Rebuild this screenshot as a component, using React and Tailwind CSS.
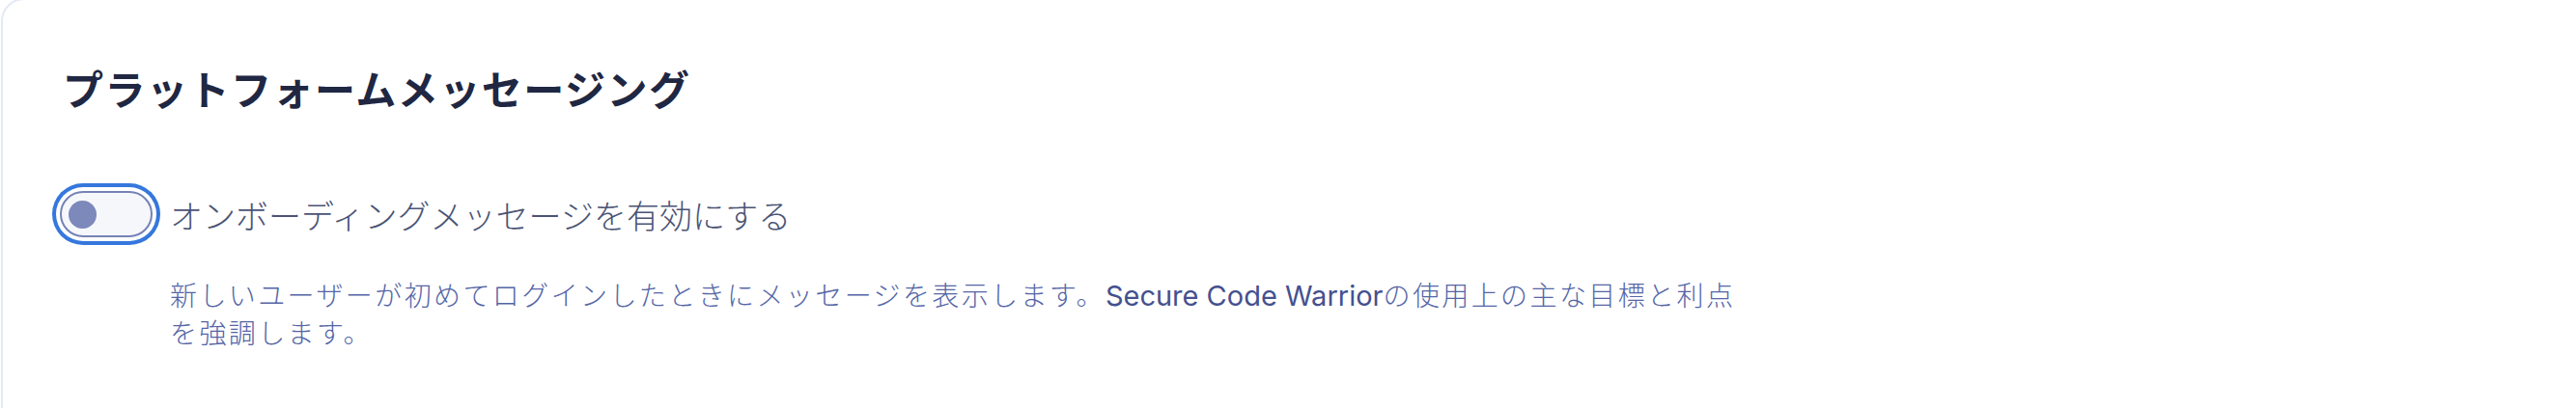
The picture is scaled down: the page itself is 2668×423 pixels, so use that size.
import React, { useState } from "react";

const cjk = { fontFamily: '"Noto Sans CJK JP", "Noto Sans", sans-serif' };
const mixed = { fontFamily: 'Inter, "Noto Sans CJK JP", sans-serif' };

export default function App() {
  const [enabled, setEnabled] = useState(false);

  return (
    <div className="min-h-[423px] bg-white overflow-hidden">
      <section className="-mt-0.5 ml-px min-h-[440px] w-[2700px] rounded-tl-[24px] border-2 border-[#e4e8f4] bg-white pl-[62px] pt-[62px]">
        <h2
          style={cjk}
          className="text-[42px] leading-[1.4] font-bold tracking-[1.5px] text-[#1f2742]"
        >
          プラットフォームメッセージング
        </h2>

        <div className="mt-[76px] flex items-center gap-[18px]">
          <button
            type="button"
            role="switch"
            aria-checked={enabled}
            onClick={() => setEnabled(!enabled)}
            className="ml-[-3px] flex h-[48px] w-[96px] shrink-0 items-center rounded-full border-2 border-[#7482b6] bg-[#f6f7fb] pl-[7px] ring-4 ring-[#3577dd] ring-offset-4 ring-offset-white"
          >
            <span className="block h-[29px] w-[29px] rounded-full bg-[#7d88bb]" />
          </button>
          <span
            style={cjk}
            className="text-[34px] leading-normal font-light tracking-normal text-[#4b5475]"
          >
            オンボーディングメッセージを有効にする
          </span>
        </div>

        <p
          style={mixed}
          className="mt-[39px] ml-[111px] max-w-[1635px] text-[28px] leading-[39px] font-light tracking-[2.4px] text-[#5566a6]"
        >
          新しいユーザーが初めてログインしたときにメッセージを表示します。
          <span className="text-[29px] font-normal tracking-normal text-[#44518f]">Secure Code Warrior</span>
          の使用上の主な目標と利点を強調します。
        </p>
      </section>
    </div>
  );
}
